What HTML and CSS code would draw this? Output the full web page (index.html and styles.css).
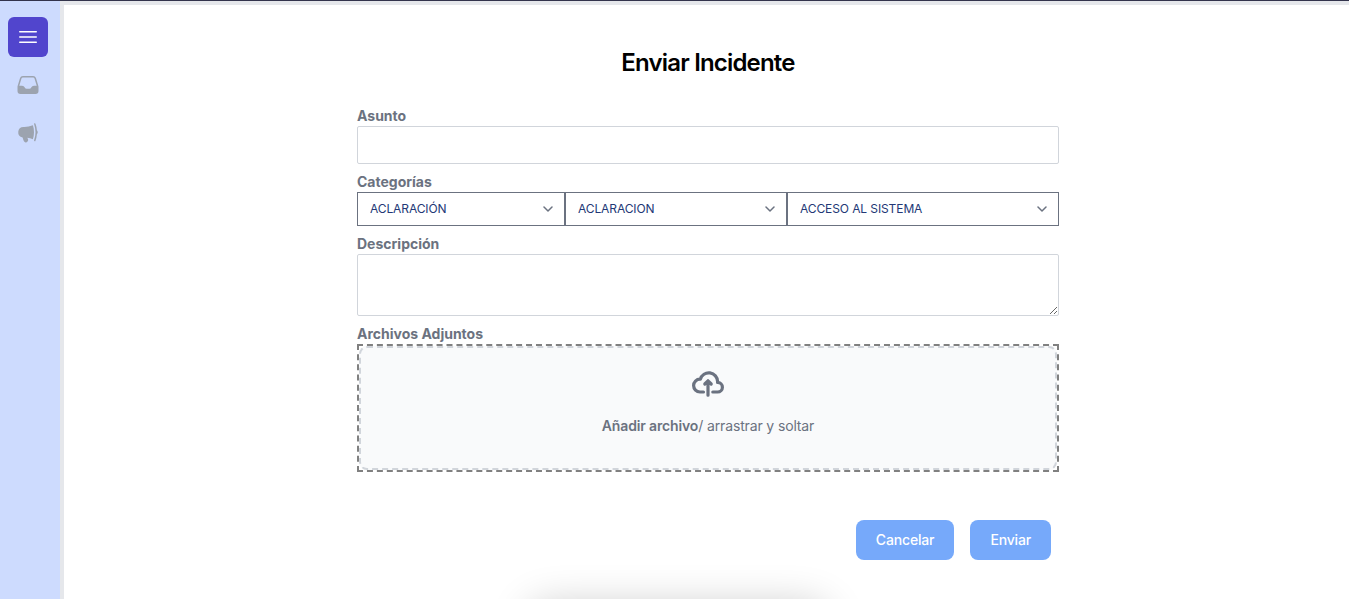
FILE: index.html
```html
<!DOCTYPE html>
<html lang="es">
<head>
<meta charset="utf-8">
<title>Enviar Incidente</title>
<link rel="stylesheet" href="styles.css">
</head>
<body>
<div class="app">
  <nav class="sidebar">
    <button class="nav-item active" type="button" aria-label="Menú">
      <svg viewBox="0 0 24 24" fill="none" stroke="currentColor" stroke-width="1.5" stroke-linecap="round"><path d="M3.75 6.75h16.5M3.75 12h16.5M3.75 17.25h16.5"/></svg>
    </button>
    <button class="nav-item" type="button" aria-label="Bandeja">
      <svg viewBox="0 0 24 24" fill="currentColor" fill-rule="evenodd"><path d="M6.912 3a3 3 0 00-2.868 2.118l-2.411 7.838a3 3 0 00-.133.882V18a3 3 0 003 3h15a3 3 0 003-3v-4.162c0-.299-.045-.596-.133-.882l-2.412-7.838A3 3 0 0017.088 3H6.912zm13.823 9.75l-2.213-7.191A1.5 1.5 0 0017.088 4.5H6.912a1.5 1.5 0 00-1.434 1.059L3.265 12.75H6.11a3 3 0 012.684 1.658l.256.513a1.5 1.5 0 001.342.829h3.218a1.5 1.5 0 001.342-.83l.256-.512a3 3 0 012.684-1.658h2.844z"/></svg>
    </button>
    <button class="nav-item" type="button" aria-label="Avisos">
      <svg viewBox="0 0 24 24" fill="currentColor"><path d="M16.881 4.346A23.112 23.112 0 018.25 6H7.5a5.25 5.25 0 00-.88 10.427 21.593 21.593 0 001.378 3.94c.464 1.004 1.674 1.32 2.582.796l.657-.379c.88-.508 1.165-1.593.772-2.468a17.116 17.116 0 01-.628-1.607c1.918.258 3.76.75 5.5 1.446A21.727 21.727 0 0018 11.25c0-2.414-.393-4.735-1.119-6.904zM18.26 3.74a23.22 23.22 0 011.24 7.51 23.22 23.22 0 01-1.41 7.992.75.75 0 101.409.516 24.555 24.555 0 001.415-6.43 2.992 2.992 0 00.836-2.078c0-.806-.319-1.54-.836-2.078a24.65 24.65 0 00-1.415-6.43.75.75 0 10-1.409.516c.059.16.116.321.17.483z"/></svg>
    </button>
  </nav>
  <main class="content">
    <form class="form">
      <h1 class="title">Enviar Incidente</h1>
      <label class="label" for="asunto">Asunto</label>
      <input class="input" id="asunto" type="text">
      <span class="label">Categorías</span>
      <div class="selects">
        <select class="select" aria-label="Categoría"><option>ACLARACIÓN</option></select>
        <select class="select" aria-label="Subcategoría"><option>ACLARACION</option></select>
        <select class="select" aria-label="Detalle"><option>ACCESO AL SISTEMA</option></select>
      </div>
      <label class="label" for="descripcion">Descripción</label>
      <textarea class="textarea" id="descripcion"></textarea>
      <span class="label">Archivos Adjuntos</span>
      <div class="dropzone">
        <div class="dropzone-inner">
          <svg class="upload-icon" viewBox="0 0 20 16" fill="none" stroke="currentColor" stroke-width="2" stroke-linecap="round" stroke-linejoin="round"><path d="M13 13h3a3 3 0 0 0 0-6h-.025A5.56 5.56 0 0 0 16 6.5 5.5 5.5 0 0 0 5.207 5.021C5.137 5.017 5.071 5 5 5a4 4 0 0 0 0 8h2.167M10 15V6m0 0L8 8m2-2 2 2"/></svg>
          <p class="hint"><b>Añadir archivo</b>/ arrastrar y soltar</p>
        </div>
      </div>
      <div class="actions">
        <button class="btn" type="button">Cancelar</button>
        <button class="btn" type="button">Enviar</button>
      </div>
    </form>
  </main>
  <div class="panel-shadow"></div>
</div>
</body>
</html>
```
FILE: styles.css
```css
* { box-sizing: border-box; }
body { margin: 0; font-family: Inter, "Liberation Sans", sans-serif; overflow: hidden; }
button, input, select, textarea { font: inherit; margin: 0; }
.app {
  position: relative;
  display: flex;
  height: 599px;
  overflow: hidden;
  border-top: 1px solid #33344c;
}
.sidebar {
  display: flex;
  flex-direction: column;
  gap: 8px;
  flex: 0 0 60px;
  padding: 16px 8px;
  background: #cddbfe;
}
.nav-item {
  display: flex;
  align-items: center;
  justify-content: center;
  width: 40px;
  height: 40px;
  padding: 0;
  border: 0;
  border-radius: 6px;
  background: none;
  color: #9ca3af;
}
.nav-item svg { width: 24px; height: 24px; }
.nav-item.active { background: #5145cd; color: #fff; }
.content {
  flex: 1;
  border: solid #e5e7eb;
  border-width: 4px 0 0 4px;
  background: #fff;
}
.form {
  display: flex;
  flex-direction: column;
  width: 702px;
  margin-left: 293px;
  padding-top: 42px;
}
.title {
  margin: 0 0 29px;
  font-size: 24px;
  line-height: 32px;
  font-weight: 600;
  letter-spacing: -0.82px;
  text-align: center;
  color: #000;
}
.label {
  padding-top: 1px;
  height: 18px;
  font-size: 14px;
  line-height: 14px;
  font-weight: 700;
  color: #6b7280;
}
.input, .textarea {
  display: block;
  width: 100%;
  border: 1px solid #d1d5db;
  border-radius: 2px;
  background: #fff;
}
.input { height: 38px; margin-bottom: 10px; }
.textarea { height: 62px; margin-bottom: 10px; resize: vertical; }
.selects {
  display: grid;
  grid-template-columns: 208px 222px 272px;
  margin-bottom: 10px;
}
.select {
  appearance: none;
  height: 34px;
  padding: 0 40px 0 12px;
  border: 1px solid #6b7280;
  border-radius: 0;
  background: #fff url("data:image/svg+xml,%3Csvg xmlns='http://www.w3.org/2000/svg' viewBox='0 0 10 6'%3E%3Cpath fill='none' stroke='%236b7280' stroke-width='1.5' stroke-linecap='round' stroke-linejoin='round' d='m1 1 4 4 4-4'/%3E%3C/svg%3E") no-repeat right 11.5px center / 10px 6px;
  font-size: 12px;
  line-height: 16px;
  letter-spacing: -0.1px;
  color: #233876;
}
.dropzone { height: 128px; border: 2px dashed #808080; }
.dropzone-inner {
  display: flex;
  flex-direction: column;
  align-items: center;
  height: 100%;
  padding-top: 20px;
  border: 2px dashed #d1d5db;
  border-radius: 8px;
  background: #f9fafb;
  color: #6b7280;
}
.upload-icon { width: 32px; height: 32px; }
.hint { margin: 16px 0 0; font-size: 14px; line-height: 20px; letter-spacing: -0.14px; }
.hint b { font-weight: 600; }
.actions {
  display: flex;
  justify-content: flex-end;
  gap: 16px;
  padding: 48px 8px 0 0;
}
.btn {
  height: 40px;
  padding: 0 20px 2px;
  border: 0;
  border-radius: 8px;
  background: #76a9fa;
  color: #fff;
  font-size: 14px;
  font-weight: 500;
  letter-spacing: -0.16px;
}
.panel-shadow {
  position: absolute;
  left: 528px;
  top: 603px;
  width: 300px;
  height: 60px;
  border-radius: 20px;
  box-shadow: 0 0 40px rgba(0, 0, 0, 0.2);
}
```
